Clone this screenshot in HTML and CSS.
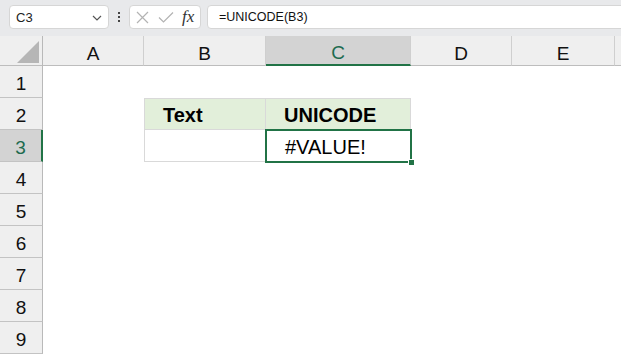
FILE: index.html
```html
<!DOCTYPE html>
<html lang="en">
<head>
    <meta charset="UTF-8">
    <title>UNICODE</title>
    <link rel="stylesheet" href="styles.css">
</head>
<body>

    <div class="toolbar">
        <div class="name-box">
            <span>C3</span>
            <svg class="chevron" width="10" height="6" viewBox="0 0 10 6"><path d="M1 1 L5 5 L9 1" fill="none" stroke="#555" stroke-width="1.2"/></svg>
        </div>
        <div class="grip">
            <i></i><i></i><i></i>
        </div>
        <div class="fx-box">
            <svg width="13" height="13" viewBox="0 0 13 13"><path d="M1 1 L12 12 M12 1 L1 12" stroke="#b3b3b3" stroke-width="1.2"/></svg>
            <svg width="16" height="11" viewBox="0 0 16 11"><path d="M1 5.5 L5.5 10 L15 0.5" fill="none" stroke="#b3b3b3" stroke-width="1.2"/></svg>
            <span class="fx">fx</span>
        </div>
        <div class="formula">=UNICODE(B3)</div>
    </div>

    <div class="sheet">
        <div class="corner"><span class="tri"></span></div>
        <div class="col-head">A</div>
        <div class="col-head">B</div>
        <div class="col-head active">C</div>
        <div class="col-head">D</div>
        <div class="col-head">E</div>
        <div class="col-head last"></div>

        <div class="row-head">1</div>
        <div class="row-head">2</div>
        <div class="row-head active">3</div>
        <div class="row-head">4</div>
        <div class="row-head">5</div>
        <div class="row-head">6</div>
        <div class="row-head">7</div>
        <div class="row-head">8</div>
        <div class="row-head">9</div>

        <!-- table B2:C3 -->
        <div class="cell th b2">Text</div>
        <div class="cell th c2">UNICODE</div>
        <div class="cell b3"></div>
        <div class="cell c3 selected">#VALUE!</div>
    </div>

</body>
</html>
```

FILE: styles.css
```css
body {
    margin: 0;
    width: 621px;
    height: 356px;
    overflow: hidden;
    background: #fff;
    font-family: "Liberation Sans", Arial, sans-serif;
}

/* Formula bar */
.toolbar {
    display: flex;
    align-items: flex-start;
    height: 36px;
    padding: 5px 0 0 9px;
    box-sizing: border-box;
    background: #e8e9eb;
}

.name-box {
    display: flex;
    align-items: center;
    justify-content: space-between;
    width: 100px;
    height: 24px;
    padding: 0 6px 0 6px;
    box-sizing: border-box;
    background: #fff;
    border: 1px solid #d6d6d6;
    border-radius: 4px;
    font-size: 13px;
    color: #222;
}

.name-box .chevron {
    margin-top: 1px;
}

.grip {
    display: flex;
    flex-direction: column;
    gap: 2px;
    margin: 7px 9px 0 9px;
}

.grip i {
    display: block;
    width: 2px;
    height: 2px;
    background: #444;
}

.fx-box {
    display: flex;
    align-items: center;
    gap: 9px;
    width: 72px;
    height: 24px;
    padding-left: 6px;
    box-sizing: border-box;
    background: #fff;
    border: 1px solid #d6d6d6;
    border-radius: 4px;
}

.fx-box .fx {
    margin-left: -1px;
    font-family: "Liberation Serif", "Times New Roman", serif;
    font-style: italic;
    font-size: 17px;
    color: #333;
}

.formula {
    flex: 1;
    height: 24px;
    margin: 0 -10px 0 6px;
    padding-left: 11px;
    box-sizing: border-box;
    background: #fff;
    border: 1px solid #d6d6d6;
    border-radius: 4px;
    font-size: 12.5px;
    line-height: 22px;
    color: #111;
}

/* Grid */
.sheet {
    display: grid;
    grid-template-columns: 43px 101px 122px 145px 101px 103px 1fr;
    grid-template-rows: 30px repeat(9, 32px);
    background: #fff;
}

.corner {
    position: relative;
    background: #efefef;
    border-right: 1px solid #b9b9b9;
    border-bottom: 1px solid #bdbdbd;
}

.corner .tri {
    position: absolute;
    left: 17px;
    top: 5px;
    width: 0;
    height: 0;
    border-left: 22px solid transparent;
    border-bottom: 22px solid #b6b6b6;
}

.col-head {
    display: flex;
    align-items: flex-end;
    justify-content: center;
    padding-bottom: 0;
    box-sizing: border-box;
    background: #efefef;
    border-right: 1px solid #cfcfcf;
    border-bottom: 1px solid #bdbdbd;
    font-size: 19px;
    color: #111;
}

.col-head.last {
    border-right: none;
}

.col-head.active {
    background: #d3d3d3;
    border-bottom: 2px solid #217346;
    color: #1d6b4f;
}

.row-head {
    grid-column: 1;
    display: flex;
    align-items: flex-end;
    justify-content: center;
    padding-bottom: 2px;
    box-sizing: border-box;
    background: #efefef;
    border-right: 1px solid #b9b9b9;
    border-bottom: 1px solid #c3c3c3;
    font-size: 19px;
    color: #111;
}

.row-head.active {
    background: #d3d3d3;
    border-right: 2px solid #217346;
    color: #1d6b4f;
}

/* Table cells */
.cell {
    display: flex;
    align-items: flex-end;
    padding: 0 0 2px 18px;
    box-sizing: border-box;
    border-right: 1px solid #d9d9d9;
    border-bottom: 1px solid #d9d9d9;
    font-size: 20px;
    color: #000;
}

.cell.th {
    background: #e2efda;
    border-top: 1px solid #d9d9d9;
    font-weight: bold;
}

.b2 { grid-column: 3; grid-row: 3; border-left: 1px solid #d9d9d9; }
.c2 { grid-column: 4; grid-row: 3; }
.b3 { grid-column: 3; grid-row: 4; border-left: 1px solid #d9d9d9; }
.c3 { grid-column: 4; grid-row: 4; }

.cell.selected {
    position: relative;
    margin: -1px;
    padding-left: 18px;
    padding-bottom: 2px;
    border: 2px solid #217346;
}

.cell.selected::after {
    content: "";
    position: absolute;
    right: -5px;
    bottom: -5px;
    width: 5px;
    height: 5px;
    background: #217346;
    border: 1px solid #fff;
}
```
